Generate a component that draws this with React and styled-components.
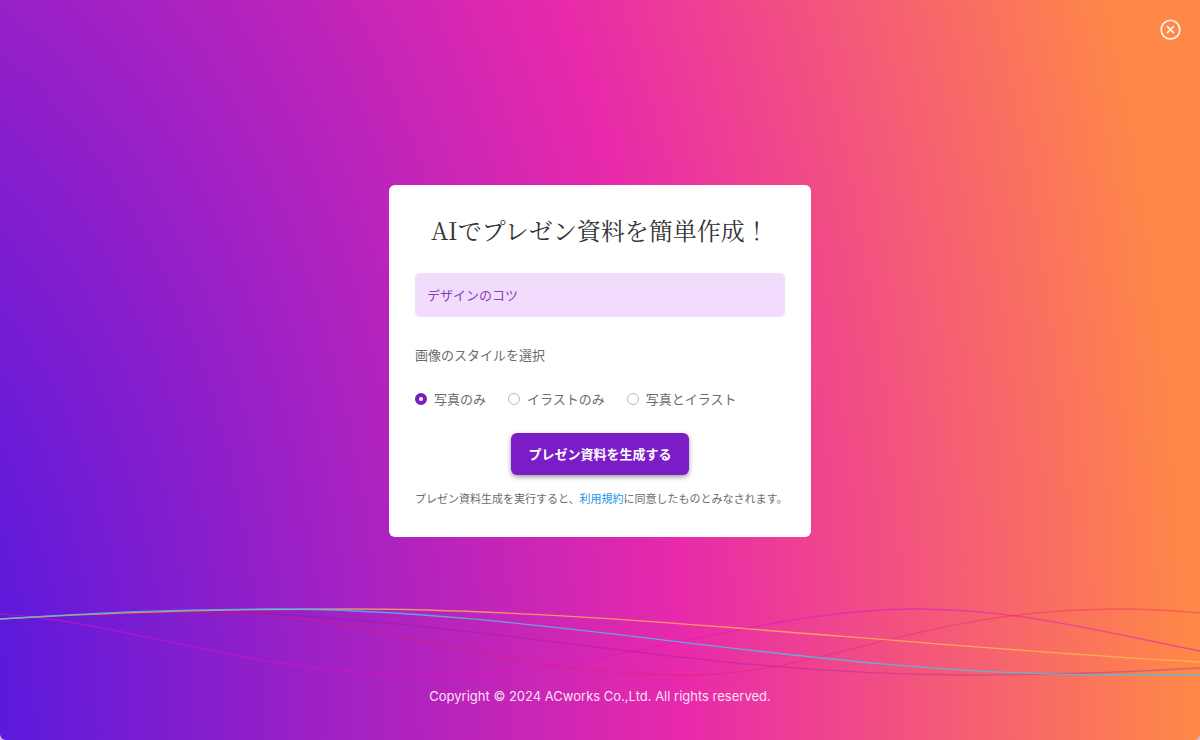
import React, { useState } from "react";
import styled, { createGlobalStyle } from "styled-components";

const GlobalStyle = createGlobalStyle`
  *, *::before, *::after { box-sizing: border-box; }
  html, body { margin: 0; background: #d9b6e6; }
  body { font-family: Inter, "Noto Sans CJK JP", sans-serif; color: #6c6c6c; }
`;

const Page = styled.div`
  position: relative;
  isolation: isolate;
  min-height: 100vh;
  display: flex;
  flex-direction: column;
  overflow: hidden;
  border-radius: 0 0 6px 6px;
  background: radial-gradient(117% 306% at -18% 100%, #5a19dc 15%, #e829ab 64%, #ff8748 100%);
`;

const TopBar = styled.header`
  display: flex;
  justify-content: flex-end;
  padding: 19px 19px 0;
`;

const CloseButton = styled.button`
  display: flex;
  padding: 0;
  border: 0;
  background: none;
  color: #fff0e2;
  cursor: pointer;
`;

const Main = styled.main`
  flex: 1;
  display: flex;
  align-items: center;
  justify-content: center;
  padding: 24px 16px 28px;
`;

const Card = styled.form`
  width: 100%;
  max-width: 422px;
  padding: 26px 26px 28px;
  border-radius: 6px;
  background: #fff;
`;

const Title = styled.h1`
  margin: 0 0 24px;
  font: 400 24px/38px "Noto Serif CJK JP", "Liberation Serif", "Noto Sans CJK JP", serif;
  text-align: center;
  white-space: nowrap;
  color: #333;
`;

const TopicInput = styled.input`
  display: block;
  width: 100%;
  height: 44px;
  padding: 0 12px;
  border: 0;
  border-radius: 5px;
  background: #f1dcfd;
  color: #8a3dbb;
  font: 400 13px/20px Inter, "Noto Sans CJK JP", sans-serif;
`;

const StyleGroup = styled.fieldset`
  margin: 28px 0 24px;
  padding: 0;
  border: 0;
`;

const Legend = styled.legend`
  padding: 0;
  margin-bottom: 24px;
  font-size: 13px;
  line-height: 20px;
`;

const Options = styled.div`
  display: flex;
  gap: 22px;
`;

const Option = styled.label`
  display: flex;
  align-items: center;
  gap: 7px;
  font-size: 13px;
  line-height: 20px;
  white-space: nowrap;
`;

const Radio = styled.input`
  appearance: none;
  width: 12px;
  height: 12px;
  margin: 0;
  border: 1px solid #bbb;
  border-radius: 50%;
  background: #fff;
  &:checked { border: 4px solid #7a1dc2; }
`;

const SubmitButton = styled.button`
  display: block;
  margin: 0 auto 14px;
  height: 42px;
  padding: 0 17px;
  border: 0;
  border-radius: 6px;
  background: #7c1cc6;
  box-shadow: 0 2px 5px rgba(0, 0, 0, 0.4);
  color: #fff;
  font: 700 13px/20px Inter, "Noto Sans CJK JP", sans-serif;
  white-space: nowrap;
`;

const Terms = styled.p`
  margin: 0;
  font-size: 11px;
  line-height: 20px;
  white-space: nowrap;
`;

const TermsLink = styled.a`
  color: #2196e8;
  text-decoration: none;
`;

const Footer = styled.footer`
  padding: 0 16px 32px;
  text-align: center;
  font-size: 13px;
  line-height: 24px;
  color: #fbe0f8;
`;

const Waves = styled.svg`
  position: absolute;
  z-index: -1;
  left: 0;
  bottom: 60px;
  width: 100%;
  height: 76px;
`;

const waves = [
  { d: "M0 10C130 18 250 71 430 71C600 71 760 5 915 5C1010 5 1080 23 1200 47", color: "#e112c8", opacity: 0.5 },
  { d: "M0 15C130 8 220 5 300 14C450 36 530 71 690 71C820 71 920 5 1120 5C1150 5 1180 7 1200 9", color: "#e91e55", opacity: 0.35 },
  { d: "M0 15C110 7 190 5 270 10C530 25 710 71 970 71C1060 71 1130 68 1200 64", color: "#86189e", opacity: 0.3 },
  { d: "M0 15C100 9 220 5 350 5C600 5 900 42 1200 58", color: "#ffc34d", opacity: 0.7 },
  { d: "M0 15C110 8 180 5 270 5C550 5 800 71 1120 71L1200 71", color: "#48c4e8", opacity: 0.8 },
];

const CloseIcon = () => (
  <svg width="22" height="22" viewBox="0 0 22 22" fill="none" stroke="currentColor" aria-hidden="true">
    <circle cx="11.5" cy="10.7" r="9.3" strokeWidth="1.8" />
    <path d="M8 7.2l7 7M15 7.2l-7 7" strokeWidth="1.7" />
  </svg>
);

const styles = ["写真のみ", "イラストのみ", "写真とイラスト"];

export default function App() {
  const [topic, setTopic] = useState("デザインのコツ");
  const [style, setStyle] = useState(styles[0]);
  return (
    <>
      <GlobalStyle />
      <Page lang="ja">
        <Waves viewBox="0 0 1200 76" preserveAspectRatio="none" fill="none" aria-hidden="true">
          {waves.map((w) => (
            <path key={w.color} d={w.d} stroke={w.color} strokeOpacity={w.opacity} strokeWidth="1.3" />
          ))}
        </Waves>
        <TopBar>
          <CloseButton type="button" aria-label="閉じる"><CloseIcon /></CloseButton>
        </TopBar>
        <Main>
          <Card onSubmit={(e) => e.preventDefault()}>
            <Title>AIでプレゼン資料を簡単作成！</Title>
            <TopicInput aria-label="プレゼンのテーマ" value={topic} onChange={(e) => setTopic(e.target.value)} />
            <StyleGroup>
              <Legend>画像のスタイルを選択</Legend>
              <Options>
                {styles.map((name) => (
                  <Option key={name}>
                    <Radio type="radio" name="style" checked={style === name} onChange={() => setStyle(name)} />
                    {name}
                  </Option>
                ))}
              </Options>
            </StyleGroup>
            <SubmitButton type="submit">プレゼン資料を生成する</SubmitButton>
            <Terms>
              プレゼン資料生成を実行すると、<TermsLink href="#terms">利用規約</TermsLink>に同意したものとみなされます。
            </Terms>
          </Card>
        </Main>
        <Footer>Copyright © 2024 ACworks Co.,Ltd. All rights reserved.</Footer>
      </Page>
    </>
  );
}
